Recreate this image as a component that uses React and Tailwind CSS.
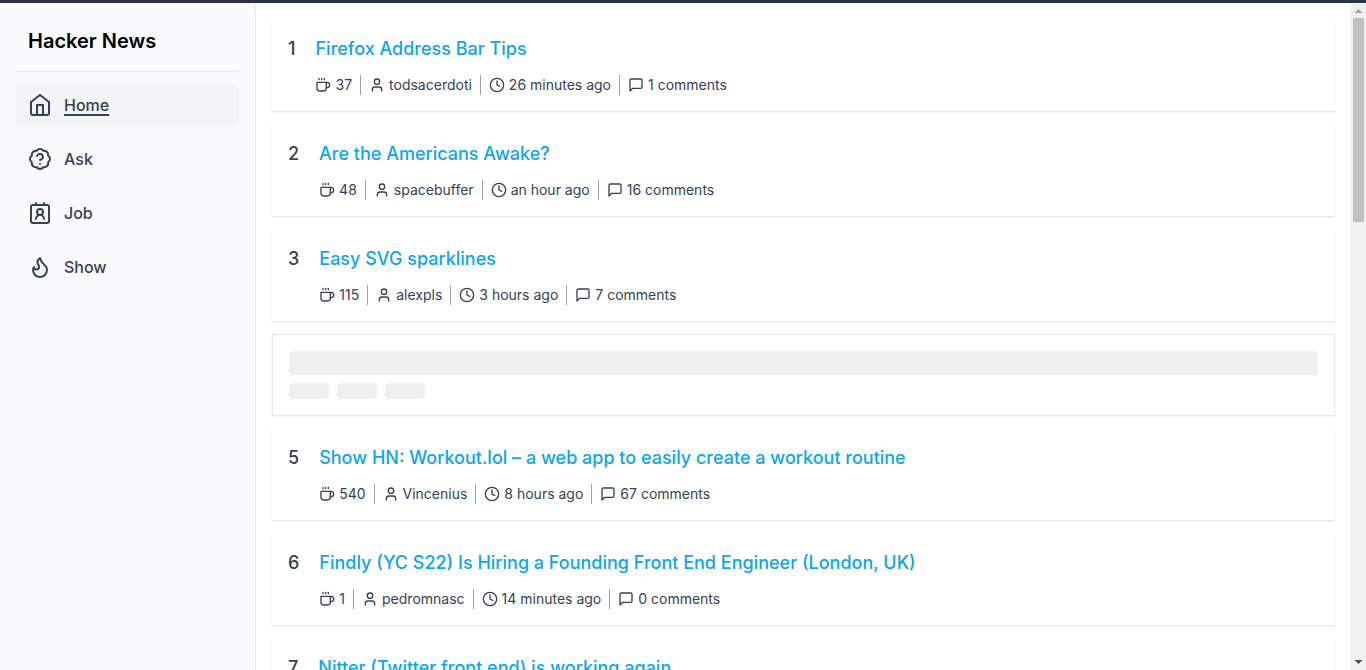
import { Clock, Flame, User, BadgeQuestionMark } from "lucide-react";

function Icon({ className, children }) {
  return (
    <svg viewBox="0 0 24 24" className={className} fill="none" stroke="currentColor" strokeWidth="2" strokeLinecap="round" strokeLinejoin="round" aria-hidden="true">
      {children}
    </svg>
  );
}

function HomeIcon() {
  return (
    <Icon className="size-6 shrink-0">
      <path d="m3 9 9-7 9 7v11a2 2 0 0 1-2 2H5a2 2 0 0 1-2-2z" />
      <path d="M9 22V12h6v10" />
    </Icon>
  );
}

function JobIcon() {
  return (
    <Icon className="size-6 shrink-0">
      <path d="M16 18a4 4 0 0 0-8 0" />
      <circle cx="12" cy="11" r="3" />
      <rect x="3" y="4" width="18" height="18" rx="2" />
      <path d="M8 2v2M16 2v2" />
    </Icon>
  );
}

function CupIcon() {
  return (
    <Icon className="size-4 shrink-0">
      <path d="M17 8h1a4 4 0 1 1 0 8h-1" />
      <path d="M3 8h14v9a4 4 0 0 1-4 4H7a4 4 0 0 1-4-4Z" />
      <path d="M6 2v2M10 2v2M14 2v2" />
    </Icon>
  );
}

function CommentIcon() {
  return (
    <Icon className="size-4 shrink-0">
      <path d="M21 15a2 2 0 0 1-2 2H7l-4 4V5a2 2 0 0 1 2-2h14a2 2 0 0 1 2 2z" />
    </Icon>
  );
}

const nav = [
  { label: "Home", icon: <HomeIcon />, active: true },
  { label: "Ask", icon: <BadgeQuestionMark className="size-6 shrink-0" /> },
  { label: "Job", icon: <JobIcon /> },
  { label: "Show", icon: <Flame className="size-6 shrink-0" /> },
];

const stories = [
  { rank: 1, title: "Firefox Address Bar Tips", points: 37, by: "todsacerdoti", time: "26 minutes ago", comments: 1 },
  { rank: 2, title: "Are the Americans Awake?", points: 48, by: "spacebuffer", time: "an hour ago", comments: 16 },
  { rank: 3, title: "Easy SVG sparklines", points: 115, by: "alexpls", time: "3 hours ago", comments: 7 },
  { rank: 4, loading: true },
  { rank: 5, title: "Show HN: Workout.lol – a web app to easily create a workout routine", points: 540, by: "Vincenius", time: "8 hours ago", comments: 67 },
  { rank: 6, title: "Findly (YC S22) Is Hiring a Founding Front End Engineer (London, UK)", points: 1, by: "pedromnasc", time: "14 minutes ago", comments: 0 },
  { rank: 7, title: "Nitter (Twitter front end) is working again" },
];

function Story({ story }) {
  return (
    <li className="flex shrink-0 gap-5 border-b border-gray-200 p-4 shadow-xs">
      <span className="text-lg font-medium text-gray-700">{story.rank}</span>
      <div className="flex min-w-0 flex-col gap-3">
        <a href="#" className="text-lg font-medium text-[#0ea5e9]">{story.title}</a>
        {story.by && (
          <div className="flex text-sm text-gray-700">
            <span className="flex items-center gap-1 border-r border-gray-400 pr-2"><CupIcon />{story.points}</span>
            <span className="flex items-center gap-1 border-r border-gray-400 px-2"><User className="size-4" />{story.by}</span>
            <span className="flex items-center gap-1 border-r border-gray-400 px-2"><Clock className="size-4" />{story.time}</span>
            <span className="flex items-center gap-1 pl-2"><CommentIcon />{story.comments} comments</span>
          </div>
        )}
      </div>
    </li>
  );
}

function Skeleton() {
  return (
    <li className="flex shrink-0 flex-col gap-2 border border-gray-200 p-4 shadow-xs" aria-label="Loading">
      <div className="h-6 rounded bg-[#efefef]" />
      <div className="flex gap-2">
        <div className="h-4 w-10 rounded bg-[#efefef]" />
        <div className="h-4 w-10 rounded bg-[#efefef]" />
        <div className="h-4 w-10 rounded bg-[#efefef]" />
      </div>
    </li>
  );
}

function Scrollbar() {
  return (
    <div className="flex w-[15px] shrink-0 flex-col items-center bg-[#f0f0f0]" aria-hidden="true">
      <svg viewBox="0 0 15 15" className="size-[15px] shrink-0" shapeRendering="crispEdges"><path d="M4 10h7L7.5 6Z" fill="#a3a3a3" /></svg>
      <div className="flex w-full flex-1 flex-col px-[2px]">
        <div className="h-[204px] bg-[#c1c1c1]" />
      </div>
      <svg viewBox="0 0 15 15" className="size-[15px] shrink-0" shapeRendering="crispEdges"><path d="M4 5h7L7.5 9Z" fill="#505050" /></svg>
    </div>
  );
}

export default function App() {
  return (
    <div className="flex h-screen flex-col overflow-hidden border-t-3 border-[#2f3241] bg-white font-['Inter',sans-serif]">
      <div className="flex min-h-0 flex-1">
        <aside className="flex w-64 shrink-0 flex-col gap-3 border-r border-gray-200 bg-[#f9fafc] px-4 pt-4">
          <h1 className="border-b border-gray-200 px-3 pt-2 pb-4 text-xl font-semibold text-black">Hacker News</h1>
          <nav className="flex flex-col gap-3">
            {nav.map((item) => (
              <a key={item.label} href="#" className={item.active ? "flex h-[42px] items-center gap-3 rounded bg-gray-100 px-3 font-medium text-gray-700 underline decoration-2 underline-offset-3" : "flex h-[42px] items-center gap-3 rounded px-3 font-medium text-gray-700"}>
                {item.icon}
                <span>{item.label}</span>
              </a>
            ))}
          </nav>
        </aside>
        <main className="min-w-0 flex-1 overflow-hidden">
          <ol className="flex flex-col gap-3 p-4">
            {stories.map((story) => (story.loading ? <Skeleton key={story.rank} /> : <Story key={story.rank} story={story} />))}
          </ol>
        </main>
        <Scrollbar />
      </div>
    </div>
  );
}
